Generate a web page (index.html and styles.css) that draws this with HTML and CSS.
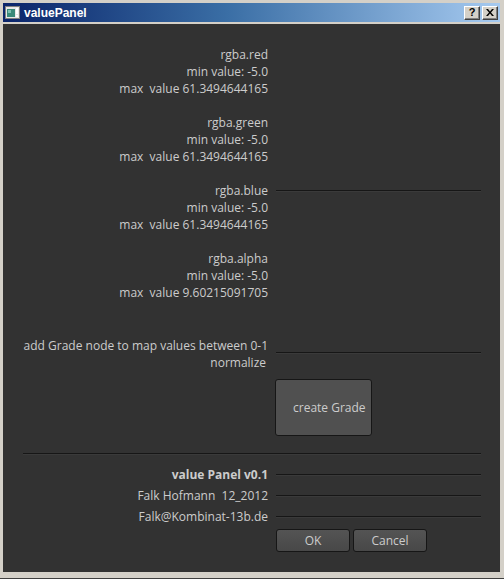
FILE: index.html
```html
<!DOCTYPE html>
<html>
<head>
<meta charset="utf-8">
<link rel="stylesheet" href="styles.css">
</head>
<body>
<div class="window">
  <div class="titlebar">
    <svg class="ticon" width="16" height="14" viewBox="0 0 16 14">
      <rect x="0.5" y="0.5" width="14" height="12" fill="#e8e8e8" stroke="#808080"/>
      <rect x="2" y="3" width="8" height="8" fill="#3a8a7a"/>
      <rect x="3" y="4" width="3" height="3" fill="#7cc0b0"/>
      <rect x="11" y="2" width="2" height="6" fill="#ffffff"/>
      <rect x="11" y="9" width="2" height="2" fill="#ffffff"/>
    </svg>
    <span class="ttext">valuePanel</span>
    <span class="tspacer"></span>
    <span class="tbtn help">?</span>
    <span class="tbtn close">
      <svg width="8" height="7" viewBox="0 0 8 7"><path d="M0 0h2l2 2.5 2-2.5h2l-3 3.5 3 3.5h-2l-2-2.5-2 2.5h-2l3-3.5z" fill="#000"/></svg>
    </span>
  </div>
  <div class="content">
    <div class="group">
      <div class="row"><div class="label">rgba.red</div><div class="field"></div></div>
      <div class="row"><div class="label">min value: -5.0</div><div class="field"></div></div>
      <div class="row"><div class="label">max&nbsp; value 61.3494644165</div><div class="field"></div></div>
    </div>
    <div class="group">
      <div class="row"><div class="label">rgba.green</div><div class="field"></div></div>
      <div class="row"><div class="label">min value: -5.0</div><div class="field"></div></div>
      <div class="row"><div class="label">max&nbsp; value 61.3494644165</div><div class="field"></div></div>
    </div>
    <div class="group">
      <div class="row"><div class="label">rgba.blue</div><div class="field"><div class="line"></div></div></div>
      <div class="row"><div class="label">min value: -5.0</div><div class="field"></div></div>
      <div class="row"><div class="label">max&nbsp; value 61.3494644165</div><div class="field"></div></div>
    </div>
    <div class="group">
      <div class="row"><div class="label">rgba.alpha</div><div class="field"></div></div>
      <div class="row"><div class="label">min value: -5.0</div><div class="field"></div></div>
      <div class="row"><div class="label">max&nbsp; value 9.60215091705</div><div class="field"></div></div>
    </div>
    <div class="grade">
      <div class="row"><div class="label">add Grade node to map values between 0-1</div><div class="field low"><div class="line"></div></div></div>
      <div class="row"><div class="label norm">normalize</div><div class="field"></div></div>
      <div class="row btnrow"><div class="label"></div><div class="field"><button class="bigbtn">create Grade</button></div></div>
    </div>
    <div class="sep"></div>
    <div class="footer">
      <div class="frow"><div class="label bold">value Panel v0.1</div><div class="field"><div class="line"></div></div></div>
      <div class="frow"><div class="label">Falk Hofmann&nbsp; 12_2012</div><div class="field"><div class="line"></div></div></div>
      <div class="frow"><div class="label">Falk@Kombinat-13b.de</div><div class="field"><div class="line"></div></div></div>
      <div class="frow buttons"><div class="label"></div><div class="field btns"><button class="btn ok">OK</button><button class="btn cancel">Cancel</button></div></div>
    </div>
  </div>
</div>
</body>
</html>
```
FILE: styles.css
```css
html, body {
  margin: 0;
  padding: 0;
  background: #d4d0c8;
}
.window {
  width: 504px;
  height: 579px;
  box-sizing: border-box;
  background: #d4d0c8;
  padding: 3px 4px 6px 3px;
  border-bottom: 1px solid #404040;
  display: flex;
  flex-direction: column;
}
.titlebar {
  height: 19px;
  margin-bottom: 2px;
  background: linear-gradient(to right, #0a246a 0%, #3a6ea5 45%, #a6caf0 100%);
  display: flex;
  align-items: center;
  padding: 0 2px 0 2px;
  box-sizing: border-box;
}
.ticon {
  margin-right: 3px;
}
.ttext {
  font-family: "Liberation Sans", Arial, sans-serif;
  font-weight: bold;
  font-size: 12px;
  color: #ffffff;
}
.tspacer {
  flex: 1;
}
.tbtn {
  width: 16px;
  height: 14px;
  box-sizing: border-box;
  background: #d4d0c8;
  border-top: 1px solid #ffffff;
  border-left: 1px solid #ffffff;
  border-right: 1px solid #404040;
  border-bottom: 1px solid #404040;
  box-shadow: inset -1px -1px 0 #808080;
  display: flex;
  align-items: center;
  justify-content: center;
  font-family: "Liberation Sans", Arial, sans-serif;
  font-weight: bold;
  font-size: 11px;
  color: #000;
  line-height: 1;
}
.tbtn.help {
  margin-right: 2px;
}
.content {
  flex: 1;
  background: #323232;
  padding: 22px 19px 0 20px;
  font-family: "Open Sans", "Noto Sans", sans-serif;
  font-size: 12px;
  color: #cccccc;
}
.row, .frow {
  display: grid;
  grid-template-columns: 245px 1fr;
  column-gap: 8px;
  height: 17px;
  line-height: 17px;
}
.frow {
  height: 21px;
  line-height: 21px;
}
.label {
  text-align: right;
  white-space: nowrap;
}
.bold {
  font-weight: bold;
}
.field {
  display: flex;
  align-items: center;
}
.field.low {
  align-items: flex-end;
  padding-bottom: 1px;
}
.line {
  flex: 1;
  height: 1px;
  background: #161616;
  box-shadow: 0 1px 0 #3a3a3a;
}
.group {
  margin-bottom: 17px;
}
.grade {
  margin-top: 36px;
}
.norm {
  padding-right: 2px;
}
.row.btnrow {
  height: auto;
  margin-top: 8px;
}
.bigbtn {
  width: 97px;
  height: 57px;
  margin-left: -1px;
  box-sizing: border-box;
  background: #505050;
  border: 1px solid #161616;
  border-radius: 3px;
  color: #cccccc;
  font-family: "Open Sans", "Noto Sans", sans-serif;
  font-size: 12px;
  text-align: left;
  padding: 0 0 0 17px;
  white-space: nowrap;
  overflow: hidden;
}
.sep {
  height: 1px;
  background: #161616;
  box-shadow: 0 1px 0 #3a3a3a;
  margin-top: 17px;
  margin-bottom: 10px;
}
.frow.buttons {
  height: auto;
  margin-top: 2px;
}
.btns {
  gap: 3px;
}
.btn {
  width: 74px;
  height: 23px;
  box-sizing: border-box;
  background: linear-gradient(#545454, #484848);
  border: 1px solid #161616;
  border-radius: 3px;
  color: #cccccc;
  font-family: "Open Sans", "Noto Sans", sans-serif;
  font-size: 12px;
  padding: 0;
}
```
